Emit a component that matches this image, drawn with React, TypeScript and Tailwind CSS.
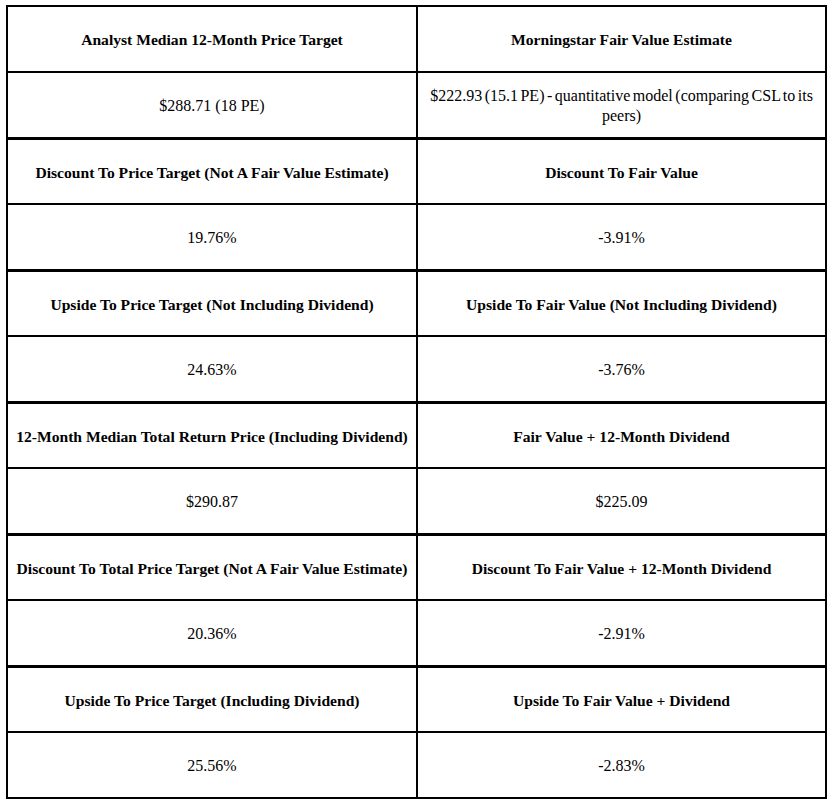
import React from "react";

const rows: [string, string, boolean][] = [
  ["Analyst Median 12-Month Price Target", "Morningstar Fair Value Estimate", true],
  ["$288.71 (18 PE)", "$222.93 (15.1 PE) - quantitative model (comparing CSL to its peers)", false],
  ["Discount To Price Target (Not A Fair Value Estimate)", "Discount To Fair Value", true],
  ["19.76%", "-3.91%", false],
  ["Upside To Price Target (Not Including Dividend)", "Upside To Fair Value (Not Including Dividend)", true],
  ["24.63%", "-3.76%", false],
  ["12-Month Median Total Return Price (Including Dividend)", "Fair Value + 12-Month Dividend", true],
  ["$290.87", "$225.09", false],
  ["Discount To Total Price Target (Not A Fair Value Estimate)", "Discount To Fair Value + 12-Month Dividend", true],
  ["20.36%", "-2.91%", false],
  ["Upside To Price Target (Including Dividend)", "Upside To Fair Value + Dividend", true],
  ["25.56%", "-2.83%", false],
];

export default function App() {
  return (
    <div className="bg-white w-[834px] h-[805px] pt-[5px] pl-[6px]" style={{ fontFamily: '"Liberation Serif", "Times New Roman", serif' }}>
      <div className="w-[821px] border-2 border-black border-t-0 flex flex-col text-black leading-[20px]">
        {rows.map(([a, b, head], i) => {
          const thick = i > 0 && i % 2 === 0;
          const txt = head ? "font-bold text-[15.6px]" : "text-[16px]";
          return (
            <div
              key={i}
              className={
                "flex " +
                (thick ? "border-t-[3px] border-black h-[66px]" : "border-t-2 border-black h-[66px]")
              }
            >
              <div className={"w-[408px] flex items-center justify-center text-center px-[2px] pt-[2px] " + txt}>
                {a}
              </div>
              <div className="w-[2px] bg-black" />
              <div
                className={
                  "flex-1 flex items-center justify-center text-center px-[10px] pt-[2px] " +
                  (i === 1 ? "[word-spacing:-1.5px] " : "") +
                  txt
                }
              >
                {b}
              </div>
            </div>
          );
        })}
      </div>
    </div>
  );
}
